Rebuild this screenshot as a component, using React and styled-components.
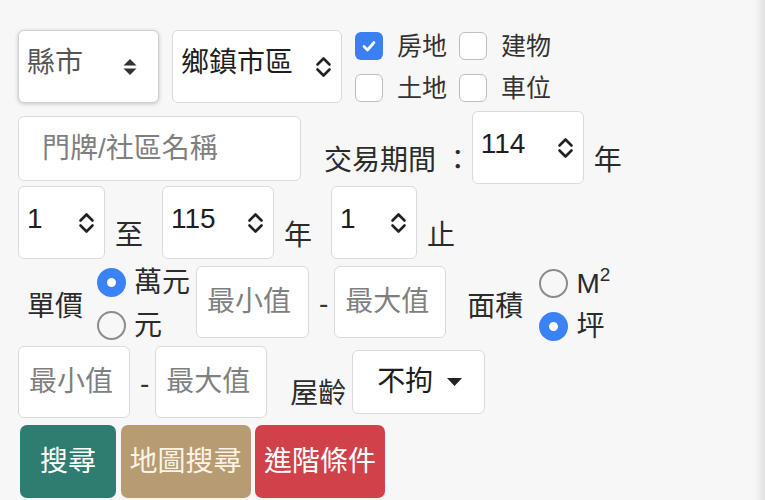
import React from "react";
import styled, { createGlobalStyle } from "styled-components";

const Global = createGlobalStyle`
  html, body { margin: 0; padding: 0; background: #f7f7f7; }
  body {
    font-family: "Liberation Sans", "Noto Sans CJK TC", sans-serif;
    color: #2b2b2b;
    overflow: hidden;
  }
  * { box-sizing: border-box; }
`;

const Page = styled.div`
  width: 765px;
  height: 500px;
  background: #f7f7f7;
  box-shadow: inset -14px 0 12px -12px rgba(0, 0, 0, 0.14);
  padding: 30px 0 0 18px;
  display: flex;
  flex-direction: column;
`;

const Row = styled.div`
  display: flex;
  align-items: flex-start;
  margin-top: ${(p) => p.$mt || 0}px;
  gap: ${(p) => p.$gap || 0}px;
  ${(p) => (p.$h ? `height: ${p.$h}px;` : "")}
`;

const SelectBox = styled.div`
  flex: none;
  width: ${(p) => p.$w}px;
  height: ${(p) => p.$h || 73}px;
  margin-left: ${(p) => p.$ml || 0}px;
  background: #fff;
  border: 1px solid ${(p) => (p.$raised ? "#cfcfcf" : "#dadada")};
  border-radius: 6px;
  box-shadow: ${(p) => (p.$raised ? "0 1px 4px rgba(0,0,0,0.2)" : "none")};
  display: flex;
  align-items: center;
  justify-content: space-between;
  padding: 0 ${(p) => p.$pr ?? 8}px 0 8px;
  font-size: 28px;
  line-height: 28px;
  color: ${(p) => (p.$muted ? "#555" : "#1e1e1e")};
`;

const Value = styled.span`
  margin-bottom: 7px;
  white-space: nowrap;
`;

const DropBox = styled.div`
  flex: none;
  width: 133px;
  height: 64px;
  margin: 4px 0 0 6px;
  background: #fff;
  border: 1px solid #dadada;
  border-radius: 6px;
  display: flex;
  align-items: center;
  justify-content: space-between;
  padding: 0 22px 0 24px;
  font-size: 28px;
  line-height: 28px;
  color: #1e1e1e;
`;

const Label = styled.span`
  flex: none;
  font-size: 28px;
  line-height: 28px;
  color: #2b2b2b;
  white-space: pre;
  align-self: ${(p) => (p.$top != null ? "flex-start" : "flex-end")};
  margin: ${(p) => (p.$top != null ? p.$top : 0)}px ${(p) => p.$mr ?? 19}px
    ${(p) => (p.$top != null ? 0 : p.$mb ?? 9)}px ${(p) => p.$ml ?? 10}px;
`;

const TextInput = styled.input`
  flex: none;
  width: ${(p) => p.$w}px;
  height: ${(p) => p.$h || 72}px;
  margin: ${(p) => p.$mt || 0}px 0 0 ${(p) => p.$ml || 0}px;
  background: #fff;
  border: 1px solid #dadada;
  border-radius: 6px;
  padding: 0 0 0 ${(p) => p.$pl || 10}px;
  font-family: "Liberation Sans", "Noto Sans CJK TC", sans-serif;
  font-size: 28px;
  color: #222;
  outline: none;
  &::placeholder {
    color: #7f7f7f;
  }
`;

const Dash = styled.span`
  flex: none;
  font-size: 28px;
  line-height: 28px;
  margin: 24px 6px 0 10px;
  color: #333;
`;

const CheckGrid = styled.div`
  display: grid;
  grid-template-columns: auto auto;
  column-gap: 12px;
  row-gap: 14px;
  margin: 2px 0 0 13px;
`;

const CheckItem = styled.label`
  display: flex;
  align-items: center;
  gap: 14px;
  font-size: 25px;
  line-height: 28px;
  color: #333;
`;

const Box = styled.span`
  flex: none;
  width: 28px;
  height: 28px;
  border-radius: 6px;
  display: flex;
  align-items: center;
  justify-content: center;
  background: ${(p) => (p.$on ? "#3a7ff4" : "#fff")};
  border: ${(p) => (p.$on ? "none" : "1.5px solid #bdbdbd")};
`;

const RadioGroup = styled.div`
  display: flex;
  flex-direction: column;
  gap: 14px;
  margin: ${(p) => p.$mt || 0}px 0 0 ${(p) => p.$ml || 0}px;
`;

const RadioItem = styled.label`
  display: flex;
  align-items: center;
  gap: 8px;
  height: 29px;
  font-size: 28px;
  line-height: 28px;
  color: #2b2b2b;
  white-space: nowrap;
`;

const Dot = styled.span`
  flex: none;
  width: 29px;
  height: 29px;
  border-radius: 50%;
  background: ${(p) => (p.$on ? "#fff" : "transparent")};
  border: ${(p) => (p.$on ? "10px solid #3b82f6" : "2px solid #8c8c8c")};
`;

const Sup = styled.sup`
  font-size: 19px;
  line-height: 0;
  vertical-align: 12px;
`;

const Button = styled.button`
  flex: none;
  height: 73px;
  min-width: ${(p) => p.$min || 0}px;
  margin-left: ${(p) => p.$ml || 0}px;
  padding: 0 9px;
  border: none;
  border-radius: 7px;
  background: ${(p) => p.$bg};
  color: ${(p) => p.$fg || "#fff"};
  font-family: "Liberation Sans", "Noto Sans CJK TC", sans-serif;
  font-size: 28px;
  line-height: 28px;
  cursor: pointer;
`;

const Chevron = () => (
  <svg width="17" height="22" viewBox="0 0 17 22" fill="none">
    <polyline points="2.5,8.5 8.5,2.5 14.5,8.5" stroke="#222" strokeWidth="2.6" strokeLinecap="round" strokeLinejoin="round" />
    <polyline points="2.5,13.5 8.5,19.5 14.5,13.5" stroke="#222" strokeWidth="2.6" strokeLinecap="round" strokeLinejoin="round" />
  </svg>
);

const SortIcon = () => (
  <svg width="16" height="18" viewBox="0 0 16 18">
    <polygon points="1.5,7.5 8,1 14.5,7.5" fill="#333" />
    <polygon points="1.5,10.5 8,17 14.5,10.5" fill="#333" />
  </svg>
);

const Caret = () => (
  <svg width="15" height="8" viewBox="0 0 15 8">
    <polygon points="0,0 15,0 7.5,8" fill="#222" />
  </svg>
);

const Tick = () => (
  <svg width="18" height="18" viewBox="0 0 18 18" fill="none">
    <polyline points="4,9.5 7.5,13 14,5.5" stroke="#fff" strokeWidth="2.8" strokeLinecap="round" strokeLinejoin="round" />
  </svg>
);

const Check = ({ on, children }) => (
  <CheckItem>
    <Box $on={on}>{on && <Tick />}</Box>
    {children}
  </CheckItem>
);

const Radio = ({ on, children }) => (
  <RadioItem>
    <Dot $on={on} />
    <span>{children}</span>
  </RadioItem>
);

const NumSelect = ({ w, ml, children }) => (
  <SelectBox $w={w} $ml={ml} $pr={9}>
    <Value>{children}</Value>
    <Chevron />
  </SelectBox>
);

export default function App() {
  return (
    <>
      <Global />
      <Page>
        <Row>
          <SelectBox $w={141} $raised $muted $pr={20}>
            <Value>縣市</Value>
            <SortIcon />
          </SelectBox>
          <SelectBox $w={170} $ml={13} $pr={9}>
            <Value>鄉鎮市區</Value>
            <Chevron />
          </SelectBox>
          <CheckGrid>
            <Check on>房地</Check>
            <Check>建物</Check>
            <Check>土地</Check>
            <Check>車位</Check>
          </CheckGrid>
        </Row>

        <Row $mt={8}>
          <TextInput $w={283} $h={65} $mt={5} $pl={23} placeholder="門牌/社區名稱" />
          <Label $ml={23} $mr={0}>交易期間 ：</Label>
          <NumSelect w={112}>114</NumSelect>
          <Label>年</Label>
        </Row>

        <Row $mt={2}>
          <NumSelect w={87}>1</NumSelect>
          <Label>至</Label>
          <NumSelect w={112}>115</NumSelect>
          <Label>年</Label>
          <NumSelect w={86}>1</NumSelect>
          <Label>止</Label>
        </Row>

        <Row $mt={7} $h={72}>
          <Label $top={27} $ml={9} $mr={14}>單價</Label>
          <RadioGroup $mt={2}>
            <Radio on>萬元</Radio>
            <Radio>元</Radio>
          </RadioGroup>
          <TextInput $w={113} $ml={6} placeholder="最小值" />
          <Dash>-</Dash>
          <TextInput $w={112} placeholder="最大值" />
          <Label $top={27} $ml={21} $mr={16}>面積</Label>
          <RadioGroup $mt={3}>
            <Radio>
              M<Sup>2</Sup>
            </Radio>
            <Radio on>坪</Radio>
          </RadioGroup>
        </Row>

        <Row $mt={8}>
          <TextInput $w={112} placeholder="最小值" />
          <Dash>-</Dash>
          <TextInput $w={112} placeholder="最大值" />
          <Label $ml={23} $mr={0} $mb={10}>屋齡</Label>
          <DropBox>
            <span>不拘</span>
            <Caret />
          </DropBox>
        </Row>

        <Row $mt={7} $gap={4.5}>
          <Button $bg="#2f7d70" $min={96} $ml={2}>搜尋</Button>
          <Button $bg="#b79b73" $fg="#fbf3e4">地圖搜尋</Button>
          <Button $bg="#d0414a">進階條件</Button>
        </Row>
      </Page>
    </>
  );
}
